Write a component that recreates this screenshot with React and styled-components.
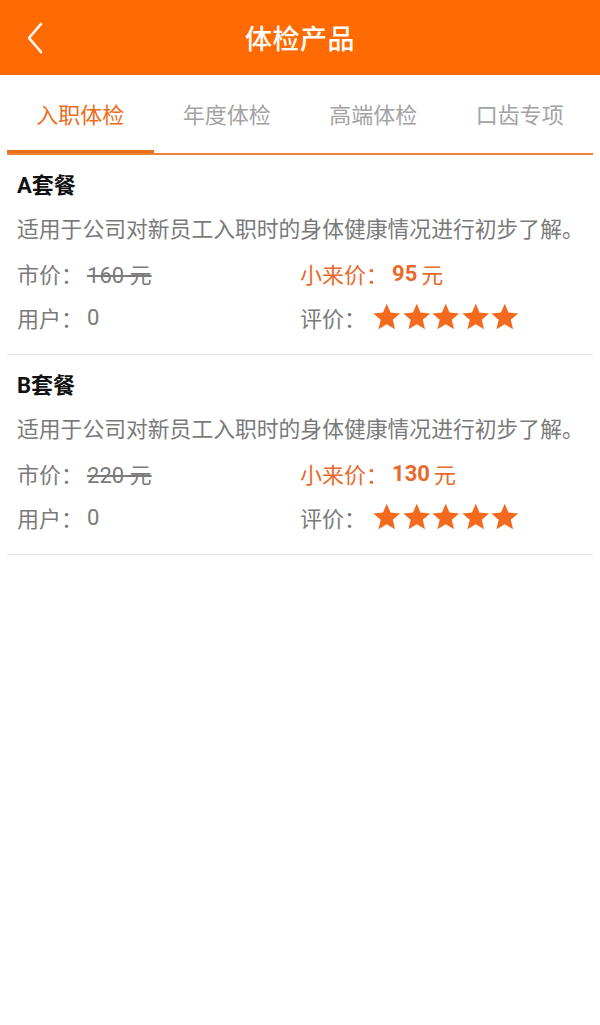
import React from 'react'
import styled, { createGlobalStyle } from 'styled-components'

const GlobalStyle = createGlobalStyle`
    html, body {
        margin: 0;
        padding: 0;
        background: #fff;
    }
    body {
        font-family: Roboto, "Noto Sans CJK SC", sans-serif;
    }
`;

const Page = styled.div`
    width: 600px;
    min-height: 1025px;
    background: #fff;
`;

const Header = styled.div`
    height: 75px;
    background-color: #ff6a02;
    display: flex;
    align-items: center;
    justify-content: center;
    position: relative;
`;

const BackBtn = styled.div`
    position: absolute;
    left: 24px;
    top: 21px;
    width: 24px;
    height: 34px;
    cursor: pointer;
`;

const Title = styled.h1`
    margin: 0;
    color: #fff;
    font-size: 27px;
    font-weight: 500;
    letter-spacing: 0.5px;
`;

const Tabs = styled.div`
    display: flex;
    margin: 0 7px;
    border-bottom: 2px solid #f08232;
`;

const Tab = styled.div`
    flex: 1;
    text-align: center;
    padding-top: 7px;
    line-height: 68px;
    font-size: 22px;
    color: ${props => props.active ? '#ea6d1c' : '#a3a3a3'};
    border-bottom: 3px solid ${props => props.active ? '#ea6d1c' : 'transparent'};
`;

const List = styled.div`
    margin: 0 7px;
`;

const Card = styled.div`
    padding: 16px 10px 15px;
    border-bottom: 1px solid #e3e3e3;
`;

const CardTitle = styled.div`
    font-size: 22px;
    line-height: 30px;
    font-weight: bold;
    color: #111;
`;

const Desc = styled.div`
    margin-top: 8px;
    font-size: 21.8px;
    line-height: 42px;
    color: #7a7a7a;
    white-space: nowrap;
`;

const InfoRow = styled.div`
    display: flex;
    align-items: center;
    height: 44px;
    font-size: 22px;
    color: #7a7a7a;
`;

const Cell = styled.div`
    width: 288px;
    display: flex;
    align-items: center;
    color: ${props => props.highlight ? '#e9692a' : 'inherit'};
`;

const Label = styled.span`
    margin-right: 4px;
`;

const Strike = styled.span`
    text-decoration: line-through;
`;

const Num = styled.span`
    font-weight: bold;
    margin-right: 4px;
`;

const Stars = styled.div`
    display: flex;
    align-items: center;
    margin-left: 2px;
`;

const Star = () => (
    <svg width="29.5" height="28" viewBox="0 0 24 23">
        <path d="M12 0.6l3.1 7.3 7.9 0.7-6 5.2 1.8 7.8L12 17.5l-6.8 4.1 1.8-7.8-6-5.2 7.9-0.7z" fill="#f36a1f"/>
    </svg>
)

const tabs = ['入职体检', '年度体检', '高端体检', '口齿专项']

const packages = [
    { name: 'A套餐', market: '160', price: '95', users: 0 },
    { name: 'B套餐', market: '220', price: '130', users: 0 },
]

export default function App() {
    return (
        <Page>
            <GlobalStyle/>
            <Header>
                <BackBtn>
                    <svg width="24" height="34" viewBox="0 0 24 34">
                        <polyline points="17,3 5,17 17,31" fill="none" stroke="#fff" strokeWidth="2.6" strokeLinecap="round" strokeLinejoin="round"/>
                    </svg>
                </BackBtn>
                <Title>体检产品</Title>
            </Header>

            <Tabs>
                {tabs.map((t, i) => <Tab key={t} active={i === 0}>{t}</Tab>)}
            </Tabs>

            <List>
                {packages.map(p => (
                    <Card key={p.name}>
                        <CardTitle>{p.name}</CardTitle>
                        <Desc>适用于公司对新员工入职时的身体健康情况进行初步了解。</Desc>
                        <InfoRow>
                            <Cell><Label>市价：</Label><Strike>{p.market} 元</Strike></Cell>
                            <Cell highlight><Label>小来价：</Label><Num>{p.price}</Num>元</Cell>
                        </InfoRow>
                        <InfoRow>
                            <Cell><Label>用户：</Label>{p.users}</Cell>
                            <Cell>
                                <Label>评价：</Label>
                                <Stars>
                                    {[0, 1, 2, 3, 4].map(i => <Star key={i}/>)}
                                </Stars>
                            </Cell>
                        </InfoRow>
                    </Card>
                ))}
            </List>
        </Page>
    )
}
